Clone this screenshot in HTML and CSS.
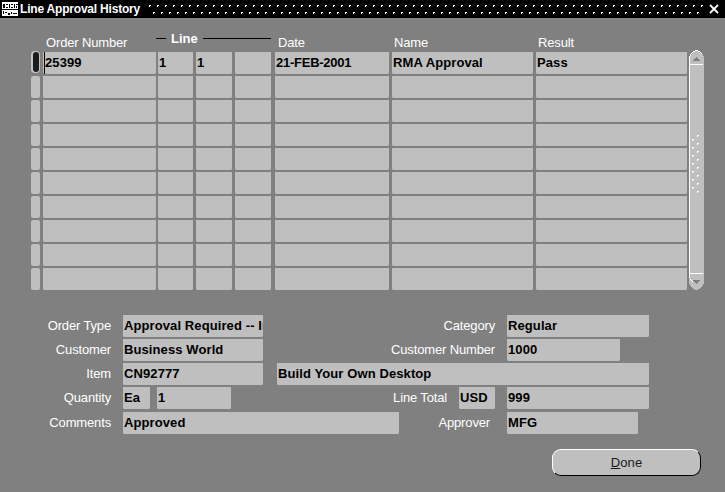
FILE: index.html
```html
<!DOCTYPE html>
<html lang="en">
<head>
<meta charset="utf-8">
<title>Line Approval History</title>
<link rel="stylesheet" href="styles.css">
</head>
<body>
<div class="window">
  <header class="titlebar">
    <svg class="app-icon" width="16" height="14" viewBox="0 0 16 14" shape-rendering="crispEdges">
      <rect width="16" height="14" fill="#fff"/>
      <path d="M1 2h2v4H1zM4 2h2v1H4zM4 5h2v1H4zM7 2h1v4H7zM9 2h2v1H9zM9 5h2v1H9zM12 2h1v4h-1zM14 2h2v1h-2zM14 4h1v2h-1z" fill="#000"/>
      <rect y="7" width="16" height="1" fill="#000"/>
      <path d="M1 9h1v3H1zM3 10h2v1H3zM6 11h2v2H6zM9 10h1v2H9zM11 11h4v1h-4z" fill="#000"/>
    </svg>
    <span class="title">Line Approval History</span>
    <svg class="title-dots" height="18" aria-hidden="true" shape-rendering="crispEdges">
      <defs>
        <pattern id="dots" width="8" height="18" patternUnits="userSpaceOnUse">
          <path d="M1 5h2v1H1zM1 6h1v1H1zM5 12h2v1H5zM5 13h1v1H5z" fill="#fff"/>
        </pattern>
      </defs>
      <rect width="100%" height="18" fill="url(#dots)"/>
    </svg>
    <svg class="close" width="10" height="10" viewBox="0 0 10 10">
      <path d="M1 1l8 8M9 1l-8 8" stroke="#fff" stroke-width="1.8" fill="none"/>
    </svg>
  </header>

  <main class="content">
    <section class="table-area">
      <div class="table-col">
        <div class="tracks heads">
          <span class="head head-order">Order Number</span>
          <div class="line-group"><i class="rule rule-short"></i><b>Line</b><i class="rule rule-long"></i></div>
          <span class="head head-date">Date</span>
          <span class="head">Name</span>
          <span class="head">Result</span>
        </div>
        <div class="tracks rows">
          <div class="ind ind-active"><i></i></div><div class="cell m2 cell-current">25399</div><div class="cell m3">1</div><div class="cell m3">1</div><div class="cell m4"></div><div class="cell m3 cell-date">21-FEB-2001</div><div class="cell m3">RMA Approval</div><div class="cell m2">Pass</div>
          <div class="ind"></div><div class="cell m2"></div><div class="cell m3"></div><div class="cell m3"></div><div class="cell m4"></div><div class="cell m3"></div><div class="cell m3"></div><div class="cell m2"></div>
          <div class="ind"></div><div class="cell m2"></div><div class="cell m3"></div><div class="cell m3"></div><div class="cell m4"></div><div class="cell m3"></div><div class="cell m3"></div><div class="cell m2"></div>
          <div class="ind"></div><div class="cell m2"></div><div class="cell m3"></div><div class="cell m3"></div><div class="cell m4"></div><div class="cell m3"></div><div class="cell m3"></div><div class="cell m2"></div>
          <div class="ind"></div><div class="cell m2"></div><div class="cell m3"></div><div class="cell m3"></div><div class="cell m4"></div><div class="cell m3"></div><div class="cell m3"></div><div class="cell m2"></div>
          <div class="ind"></div><div class="cell m2"></div><div class="cell m3"></div><div class="cell m3"></div><div class="cell m4"></div><div class="cell m3"></div><div class="cell m3"></div><div class="cell m2"></div>
          <div class="ind"></div><div class="cell m2"></div><div class="cell m3"></div><div class="cell m3"></div><div class="cell m4"></div><div class="cell m3"></div><div class="cell m3"></div><div class="cell m2"></div>
          <div class="ind"></div><div class="cell m2"></div><div class="cell m3"></div><div class="cell m3"></div><div class="cell m4"></div><div class="cell m3"></div><div class="cell m3"></div><div class="cell m2"></div>
          <div class="ind"></div><div class="cell m2"></div><div class="cell m3"></div><div class="cell m3"></div><div class="cell m4"></div><div class="cell m3"></div><div class="cell m3"></div><div class="cell m2"></div>
          <div class="ind"></div><div class="cell m2"></div><div class="cell m3"></div><div class="cell m3"></div><div class="cell m4"></div><div class="cell m3"></div><div class="cell m3"></div><div class="cell m2"></div>
        </div>
      </div>
      <svg class="scrollbar" width="15" height="240" viewBox="0 0 15 240" shape-rendering="crispEdges">
        <path d="M0 6h1V4h1V3h1V2h1V1h2V0h3v1h2v1h1v1h1v1h1v2h1v228h-1v2h-1v1h-1v1h-1v1H9v1H6v-1H4v-1H3v-1H2v-1H1v-2H0z" fill="#bfbfbf"/>
        <path d="M0 6h1V4h1V3h1V2h1V1h2V0h3v1h2v1h1v1h1v1h-1V3h-1V2H9V1H6v1H4v1H3v1H2v2H1v8h13v1H1v208h13v1H1v5h1v1h1v1h1v1H3v-1H2v-1H1v-2H0z" fill="#fff"/>
        <path d="M7 7h1v1h1v1h1v1h1v1H4v-1h1V9h1V8h1z" fill="#7f7f7f"/>
        <path d="M4 230h7v1h-1v1H9v1H8v1H7v-1H6v-1H5v-1H4z" fill="#7f7f7f"/>
        <path d="M3 89h2v1H3zM3 90h1v1H3zM3 97h2v1H3zM3 98h1v1H3zM3 105h2v1H3zM3 106h1v1H3zM3 113h2v1H3zM3 114h1v1H3zM3 121h2v1H3zM3 122h1v1H3zM3 129h2v1H3zM3 130h1v1H3zM3 137h2v1H3zM3 138h1v1H3z" fill="#fff"/>
        <path d="M8 85h2v1H8zM8 86h1v1H8zM8 93h2v1H8zM8 94h1v1H8zM8 101h2v1H8zM8 102h1v1H8zM8 109h2v1H8zM8 110h1v1H8zM8 117h2v1H8zM8 118h1v1H8zM8 125h2v1H8zM8 126h1v1H8zM8 133h2v1H8zM8 134h1v1H8zM8 141h2v1H8zM8 142h1v1H8z" fill="#fff"/>
      </svg>
    </section>

    <section class="form">
      <span class="label col-left">Order Type</span>
      <div class="field span-a">Approval Required -- Internal</div>
      <span class="label col-right">Category</span>
      <div class="field span-f">Regular</div>

      <span class="label col-left">Customer</span>
      <div class="field span-a">Business World</div>
      <span class="label col-right">Customer Number</span>
      <div class="field span-g">1000</div>

      <span class="label col-left">Item</span>
      <div class="field span-a">CN92777</div>
      <div class="field span-b">Build Your Own Desktop</div>

      <span class="label col-left">Quantity</span>
      <div class="field span-uom">Ea</div>
      <div class="field span-qty">1</div>
      <span class="label col-total">Line Total</span>
      <div class="field span-cur">USD</div>
      <div class="field span-f">999</div>

      <span class="label col-left">Comments</span>
      <div class="field span-c">Approved</div>
      <span class="label col-approver">Approver</span>
      <div class="field span-h">MFG</div>
    </section>

    <div class="actions">
      <button class="btn" type="button"><u>D</u>one</button>
    </div>
  </main>
</div>
</body>
</html>
```
FILE: styles.css
```css
* { box-sizing: border-box; }
html, body { margin: 0; padding: 0; }
body {
  width: 725px;
  height: 492px;
  overflow: hidden;
  background: #808080;
  font-family: "Liberation Sans", Arial, sans-serif;
  font-size: 13px;
  color: #fff;
}
.window { width: 725px; height: 492px; }

.titlebar {
  height: 18px;
  background: #000;
  display: flex;
  align-items: center;
  padding-left: 2px;
}
.app-icon { flex: none; }
.title {
  flex: none;
  width: 130px;
  padding-left: 2px;
  font-weight: 700;
  font-size: 12px;
  line-height: 18px;
  letter-spacing: -.2px;
  white-space: nowrap;
}
.title-dots { flex: 1; min-width: 0; }
.close { flex: none; margin: 0 6px 0 4px; }

.content { padding: 14px 0 0 31px; }

.table-area { display: flex; align-items: flex-end; }
.table-col { width: 658px; }
.tracks {
  display: grid;
  grid-template-columns: 12px 115px 38px 39px 40px 117px 144px 153px;
}
.heads { height: 20px; }
.head {
  align-self: end;
  padding: 0 0 1px 2px;
  font-size: 13px;
  line-height: 16px;
  letter-spacing: -.15px;
  white-space: nowrap;
}
.head-order { grid-column: 2; padding-left: 3px; }
.head-date { grid-column: 6; padding-left: 3px; }
.line-group {
  grid-column: 3 / 6;
  margin-left: -2px;
  margin-right: 4px;
  height: 12px;
  display: flex;
  align-items: center;
  font-size: 13px;
  line-height: 14px;
  padding-top: 1px;
}
.rule { display: block; height: 1px; margin-top: -1px; background: #000; }
.rule-short { width: 10px; margin-right: 5px; }
.rule-long { flex: 1; margin-left: 5px; }

.rows { grid-auto-rows: 22px; row-gap: 2px; }
.cell, .field {
  background: #bfbfbf;
  color: #000;
  font-weight: 700;
  font-size: 13px;
  line-height: 22px;
  letter-spacing: .1px;
  padding: 0 1px;
  white-space: nowrap;
  overflow: hidden;
  clip-path: polygon(0 0, 100% 0, 100% calc(100% - 1px), calc(100% - 1px) 100%, 1px 100%, 0 calc(100% - 1px));
}
.cell-date { letter-spacing: -.25px; }
.m2 { margin-right: 2px; }
.m3 { margin-right: 3px; }
.m4 { margin-right: 4px; }
.ind {
  margin-right: 3px;
  background: #bfbfbf;
  border-radius: 2px;
}
.ind-active {
  display: flex;
  justify-content: center;
  padding-top: 0;
  margin-top: -1px;
  margin-bottom: 1px;
  background: #c4c4c4;
  border-radius: 4px;
}
.ind-active i {
  display: block;
  width: 6px;
  height: 20px;
  margin-top: 1px;
  background: #1c1c1c;
  border-radius: 3px;
}
.cell-current { padding-left: 2px; box-shadow: inset 1px 0 0 #bfbfbf, inset 2px 0 0 #000; }
.scrollbar { flex: none; }

.form {
  margin: 25px 0 0 -31px;
  display: grid;
  grid-template-columns: 123px 27px 7px 74px 32px 14px 122px 60px 36px 12px 113px 18px 11px;
  grid-template-rows: 22px 22px 22px 22px 23px;
  row-gap: 2px;
  width: 649px;
}
.label {
  align-self: center;
  text-align: right;
  font-size: 13px;
  line-height: 16px;
  letter-spacing: -.15px;
  white-space: nowrap;
}
.col-left { grid-column: 1; padding-right: 12px; }
.col-right { grid-column: 7 / 10; }
.col-total { grid-column: 7 / 9; padding-right: 12px; }
.col-approver { grid-column: 8 / 10; padding-right: 5px; }
.field { height: 22px; align-self: end; }
.span-a { grid-column: 2 / 6; }
.span-b { grid-column: 7 / 14; }
.span-c { grid-column: 2 / 8; }
.span-f { grid-column: 11 / 14; }
.span-g { grid-column: 11 / 12; }
.span-h { grid-column: 11 / 13; }
.span-uom { grid-column: 2 / 3; }
.span-qty { grid-column: 4 / 5; }
.span-cur { grid-column: 9 / 10; }

.actions {
  display: flex;
  justify-content: flex-end;
  padding-right: 24px;
  margin-top: 15px;
}
.btn {
  width: 149px;
  height: 27px;
  padding: 0;
  background: #bfbfbf;
  color: #1a1a1a;
  font-family: inherit;
  font-size: 13px;
  letter-spacing: .1px;
  border: 1px solid;
  border-color: #fff #000 #000 #fff;
  border-radius: 9px;
}
```
